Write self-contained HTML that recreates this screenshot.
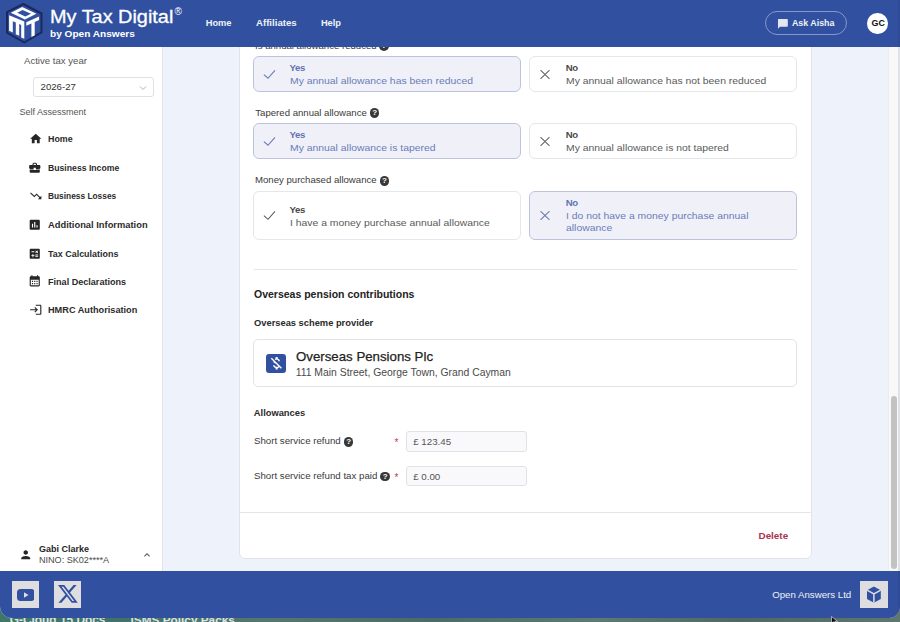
<!DOCTYPE html>
<html><head><meta charset="utf-8">
<style>
*{box-sizing:border-box;margin:0;padding:0}
html,body{width:900px;height:622px;overflow:hidden;font-family:"Liberation Sans",sans-serif;background:#3f5f55}
.a{position:absolute}
.t{position:absolute;white-space:nowrap;line-height:1}
.b{font-weight:700}
#bgtxt{position:absolute;left:0;top:596px;width:900px;height:26px;background:linear-gradient(90deg,#3f7869 0%,#3f7365 12%,#55786a 30%,#4b6d61 48%,#5d7b6f 66%,#50695f 82%,#5f776c 100%)}
#app{position:absolute;left:0;top:0;width:900px;height:617.8px;background:#eef2fa;border-radius:0 0 11px 12px;overflow:hidden}
#hdr{position:absolute;left:0;top:0;width:900px;height:47px;background:#3151a0;z-index:5}
#side{position:absolute;left:0;top:47px;width:163px;height:524px;background:#fff;border-right:1px solid #e1e4ea}
#track{position:absolute;left:888px;top:47px;width:12px;height:524px;background:#f8f8f8;border-left:1px solid #ececec}
#thumb{position:absolute;left:891px;top:396px;width:6px;height:173px;background:#c2c2c2;border-radius:3px}
#card{position:absolute;left:238.6px;top:20px;width:573px;height:539px;background:#fff;border:1px solid #e1e3e8;border-radius:0 0 6px 6px}
#ftr{position:absolute;left:0;top:571px;width:900px;height:47px;background:#3151a0}
#ftr~.a,#ftr~.t,#ftr~svg{z-index:6}
.nav{color:#eef1f8;font-size:9.3px;font-weight:700}
.sn{color:#2b2b2b;font-size:9.4px;font-weight:700;transform-origin:0 0}
.si{position:absolute;width:13px;height:13px;fill:#262626}
.opt{position:absolute;width:267.6px;border:1px solid #e6e7eb;border-radius:6px;background:#fff}
.opt.sel{background:#f0f1f8;border-color:#bdc3dd}
.lbl{color:#3a3a3a;font-size:9.6px}
.oy{font-size:9.6px;font-weight:700;color:#4a4a4a;letter-spacing:-0.35px}
.od{font-size:9.8px;color:#5a5a5a;transform:scaleX(1.06);transform-origin:0 0}
.oy.ys{color:#6273b3}
.od.ds{color:#6a7cb9}
.hq{position:absolute;width:9.8px;height:9.8px;border-radius:50%;background:#383838;color:#fff;font-size:8px;font-weight:700;text-align:center;line-height:9.8px}
.inp{position:absolute;left:406px;width:121px;height:20px;background:#f9f9fb;border:1px solid #e1e2e6;border-radius:3px}
.req{color:#b8405e;font-size:10px}
</style></head>
<body>
<div id="bgtxt"><span class="t b" style="left:9.7px;top:18.8px;font-size:11.9px;color:#dde3df">G-Cloud 15 Docs</span><span class="t b" style="left:130.6px;top:18.8px;font-size:11.8px;color:#dde3df">ISMS Policy Packs</span></div>
<div id="app">
 <div id="side">
  <div class="t" style="left:24px;top:9px;font-size:9.6px;color:#555">Active tax year</div>
  <div class="a" style="left:33.2px;top:30.2px;width:120.6px;height:20.2px;border:1px solid #dfe1e6;border-radius:3px;background:#fff"></div>
  <div class="t" style="left:40.6px;top:35px;font-size:9.6px;color:#333">2026-27</div>
  <svg class="a" style="left:139px;top:37.5px;width:8px;height:6px" viewBox="0 0 8 6"><path d="M1 1.5l3 3 3-3" fill="none" stroke="#aaa" stroke-width="0.9"/></svg>
  <div class="t" style="left:19.5px;top:61px;font-size:9px;color:#555">Self Assessment</div>
  <svg class="si" style="left:29.0px;top:84.7px;width:13.5px;height:13.5px" viewBox="0 0 24 24"><path d="M10 20v-6h4v6h5v-8h3L12 3 2 12h3v8z"/></svg>
  <div class="t sn" style="left:48.1px;top:87.03px;transform:scaleX(0.947)">Home</div>
  <svg class="si" style="left:28.4px;top:113.6px;width:13.5px;height:13.5px" viewBox="0 0 24 24"><path d="M10 16v-1H3.01L3 19c0 1.11.89 2 2 2h14c1.11 0 2-.89 2-2v-4h-7v1h-4zm10-9h-4.01V5l-2-2h-4l-2 2v2H4c-1.1 0-2 .9-2 2v3c0 1.11.89 2 2 2h6v-2h4v2h6c1.1 0 2-.9 2-2V9c0-1.1-.9-2-2-2zm-6 0h-4V5h4v2z"/></svg>
  <div class="t sn" style="left:48.1px;top:115.73px;transform:scaleX(0.924)">Business Income</div>
  <svg class="si" style="left:29.1px;top:142.2px;width:13.5px;height:13.5px" viewBox="0 0 24 24"><path d="M16 18l2.29-2.29-4.88-4.88-4 4L2 7.41 3.41 6l6 6 4-4 6.3 6.29L22 12v6z"/></svg>
  <div class="t sn" style="left:48.1px;top:144.43px;transform:scaleX(0.89)">Business Losses</div>
  <svg class="si" style="left:28.1px;top:170.6px;width:13.5px;height:13.5px" viewBox="0 0 24 24"><path d="M19 3H5c-1.1 0-2 .9-2 2v14c0 1.1.9 2 2 2h14c1.1 0 2-.9 2-2V5c0-1.1-.9-2-2-2zM9 17H7v-7h2v7zm4 0h-2V7h2v10zm4 0h-2v-4h2v4z"/></svg>
  <div class="t sn" style="left:48.1px;top:172.73px;transform:scaleX(0.996)">Additional Information</div>
  <svg class="si" style="left:28.1px;top:199.5px;width:13.5px;height:13.5px" viewBox="0 0 24 24"><path d="M19 3H5c-1.1 0-2 .9-2 2v14c0 1.1.9 2 2 2h14c1.1 0 2-.9 2-2V5c0-1.1-.9-2-2-2zm-5.97 4.06L14.09 6l1.41 1.41L16.91 6l1.06 1.06-1.41 1.41 1.41 1.41-1.06 1.06-1.41-1.4-1.41 1.41-1.06-1.060 1.41-1.41-1.41-1.42zm-6.78.66h5v1.5h-5v-1.5zM11.5 16h-2v2H8v-2H6v-1.5h2v-2h1.5v2h2V16zm6.5 1.25h-5v-1.5h5v1.5zm0-2.5h-5v-1.5h5v1.5z"/></svg>
  <div class="t sn" style="left:48.1px;top:201.73px;transform:scaleX(0.954)">Tax Calculations</div>
  <svg class="si" style="left:28.1px;top:227.1px;width:13.5px;height:13.5px" viewBox="0 0 24 24"><path d="M19 4h-1V2h-2v2H8V2H6v2H5c-1.11 0-1.99.9-1.99 2L3 20c0 1.1.89 2 2 2h14c1.1 0 2-.9 2-2V6c0-1.1-.9-2-2-2zm0 16H5V10h14v10zM9 14H7v-2h2v2zm4 0h-2v-2h2v2zm4 0h-2v-2h2v2zm-8 4H7v-2h2v2zm4 0h-2v-2h2v2zm4 0h-2v-2h2v2z"/></svg>
  <div class="t sn" style="left:48.1px;top:229.93px;transform:scaleX(0.967)">Final Declarations</div>
  <svg class="si" style="left:28.7px;top:255.5px;width:13.5px;height:13.5px" viewBox="0 0 24 24"><path d="M11 7 9.6 8.4l2.6 2.6H2v2h10.2l-2.6 2.6L11 17l5-5-5-5zm9 12h-8v2h8c1.1 0 2-.9 2-2V5c0-1.1-.9-2-2-2h-8v2h8v14z"/></svg>
  <div class="t sn" style="left:48.1px;top:258.33px;transform:scaleX(0.978)">HMRC Authorisation</div>
  <svg class="si" style="left:19.25px;top:500.75px;width:13.5px;height:13.5px" viewBox="0 0 24 24"><path d="M12 12c2.21 0 4-1.79 4-4s-1.79-4-4-4-4 1.79-4 4 1.79 4 4 4zm0 2c-2.67 0-8 1.34-8 4v2h16v-2c0-2.66-5.33-4-8-4z"/></svg>
  <div class="t b" style="left:38.9px;top:497.9px;font-size:9px;color:#262626">Gabi Clarke</div>
  <div class="t" style="left:38.9px;top:509.1px;font-size:9.1px;color:#4a4a4a">NINO: SK02****A</div>
  <svg class="a" style="left:140.9px;top:501.8px;width:12px;height:12px" viewBox="0 0 24 24"><path d="M12 8l-6 6 1.41 1.41L12 10.83l4.59 4.58L18 14z" fill="#555"/></svg>
 </div>
 <div id="card"></div>
<div class="t lbl" style="left:255px;top:40.9px">Is annual allowance reduced</div>
<div class="hq" style="left:379px;top:40.9px">?</div>
<div class="opt sel" style="left:253.3px;top:56.2px;height:35.8px"></div>
<svg class="a" style="left:263.3px;top:69px;width:14px;height:11px" viewBox="0 0 14 11"><path d="M0.9 5.6 L5 9.3 L12 1.3" fill="none" stroke="#6c7ab3" stroke-width="1.15"/></svg>
<div class="t oy ys" style="left:289.6px;top:63.08px">Yes</div>
<div class="t od ds" style="left:289.6px;top:75.9px">My annual allowance has been reduced</div>
<div class="opt" style="left:529.4px;top:56.2px;height:35.8px"></div>
<svg class="a" style="left:540.1999999999999px;top:69.7px;width:10px;height:9px" viewBox="0 0 10 9"><path d="M0.5 0.2 L9.5 8.8 M9.5 0.2 L0.5 8.8" fill="none" stroke="#5c5c5c" stroke-width="1.05"/></svg>
<div class="t oy " style="left:565.6999999999999px;top:63.08px">No</div>
<div class="t od " style="left:565.6999999999999px;top:75.9px">My annual allowance has not been reduced</div>
<div class="t lbl" style="left:255.3px;top:107.67px">Tapered annual allowance</div>
<div class="hq" style="left:369.7px;top:108.2px">?</div>
<div class="opt sel" style="left:253.3px;top:123.3px;height:36.2px"></div>
<svg class="a" style="left:263.3px;top:136.1px;width:14px;height:11px" viewBox="0 0 14 11"><path d="M0.9 5.6 L5 9.3 L12 1.3" fill="none" stroke="#6c7ab3" stroke-width="1.15"/></svg>
<div class="t oy ys" style="left:289.6px;top:130.18px">Yes</div>
<div class="t od ds" style="left:289.6px;top:143.0px">My annual allowance is tapered</div>
<div class="opt" style="left:529.4px;top:123.3px;height:36.2px"></div>
<svg class="a" style="left:540.1999999999999px;top:136.8px;width:10px;height:9px" viewBox="0 0 10 9"><path d="M0.5 0.2 L9.5 8.8 M9.5 0.2 L0.5 8.8" fill="none" stroke="#5c5c5c" stroke-width="1.05"/></svg>
<div class="t oy " style="left:565.6999999999999px;top:130.18px">No</div>
<div class="t od " style="left:565.6999999999999px;top:143.0px">My annual allowance is not tapered</div>
<div class="t lbl" style="left:255px;top:175.37px">Money purchased allowance</div>
<div class="hq" style="left:379.5px;top:175.9px">?</div>
<div class="opt" style="left:253.3px;top:190.9px;height:49.4px"></div>
<svg class="a" style="left:263.3px;top:210.2px;width:14px;height:11px" viewBox="0 0 14 11"><path d="M0.9 5.6 L5 9.3 L12 1.3" fill="none" stroke="#5c5c5c" stroke-width="1.05"/></svg>
<div class="t oy " style="left:289.6px;top:204.58px">Yes</div>
<div class="t od " style="left:289.6px;top:217.7px">I have a money purchase annual allowance</div>
<div class="opt sel" style="left:529.4px;top:190.9px;height:49.4px"></div>
<svg class="a" style="left:540.1999999999999px;top:211.4px;width:10px;height:9px" viewBox="0 0 10 9"><path d="M0.5 0.2 L9.5 8.8 M9.5 0.2 L0.5 8.8" fill="none" stroke="#6c7ab3" stroke-width="1.15"/></svg>
<div class="t oy ys" style="left:565.6999999999999px;top:197.88px">No</div>
<div class="t od ds" style="left:565.6999999999999px;top:210.6px">I do not have a money purchase annual</div>
<div class="t od ds" style="left:565.6999999999999px;top:223.4px">allowance</div>
<div class="a" style="left:254px;top:268.5px;width:543px;height:1px;background:#e6e6e9"></div>
<div class="t b" style="left:254px;top:289.2px;font-size:10.5px;color:#222">Overseas pension contributions</div>
<div class="t b" style="left:254px;top:317.8px;font-size:9.8px;color:#2a2a2a;transform:scaleX(0.952);transform-origin:0 0">Overseas scheme provider</div>
<div class="a" style="left:253.3px;top:339.3px;width:543.7px;height:48px;border:1px solid #e2e3e8;border-radius:5px"></div>
<div class="a" style="left:266.2px;top:353.8px;width:19.7px;height:19.5px;background:#3151a0;border-radius:3px"></div>
<svg class="a" style="left:268px;top:355.3px;width:16.6px;height:16.6px" viewBox="0 0 24 24"><path fill="#fff" d="M12.5 6.9c1.78 0 2.44.85 2.5 2.1h2.21c-.07-1.72-1.12-3.3-3.21-3.81V3h-3v2.16c-.53.12-1.03.3-1.48.54l1.47 1.47c.41-.17.91-.27 1.51-.27zM5.47 3.92 4.06 5.33 7.5 8.77c0 2.08 1.56 3.21 3.91 3.910l3.51 3.51c-.34.48-1.05.91-2.420.91-2.06 0-2.87-.92-2.98-2.1h-2.2c.12 2.19 1.76 3.42 3.68 3.83V21h3v-2.15c.96-.18 1.82-.55 2.45-1.12l2.22 2.22 1.41-1.41L5.47 3.92z"/></svg>
<div class="t" style="left:295.7px;top:349.5px;font-size:13.6px;color:#222;-webkit-text-stroke:0.25px #222;transform:scaleX(0.975);transform-origin:0 0">Overseas Pensions Plc</div>
<div class="t" style="left:295.7px;top:368.3px;font-size:10.38px;color:#4a4a4a">111 Main Street, George Town, Grand Cayman</div>
<div class="t b" style="left:253.8px;top:408.5px;font-size:9.34px;color:#2a2a2a">Allowances</div>
<div class="t lbl" style="left:254px;top:436.1px;font-size:9.7px">Short service refund</div>
<div class="hq" style="left:343.7px;top:436.9px">?</div>
<div class="t req" style="left:394.5px;top:437.9px">*</div>
<div class="inp" style="top:431.4px;height:20.2px"></div>
<div class="t" style="left:413.2px;top:437px;font-size:9.76px;color:#555">£ 123.45</div>
<div class="t lbl" style="left:254px;top:470.7px;font-size:9.7px">Short service refund tax paid</div>
<div class="hq" style="left:380.3px;top:471.5px">?</div>
<div class="t req" style="left:394.5px;top:472.9px">*</div>
<div class="inp" style="top:466.3px;height:20.1px"></div>
<div class="t" style="left:413.2px;top:471.7px;font-size:9.76px;color:#555">£ 0.00</div>
<div class="a" style="left:240px;top:512px;width:571px;height:1px;background:#e6e6e9"></div>
<div class="t b" style="left:758.5px;top:530.6px;font-size:9.9px;color:#a9354f">Delete</div>
 <div id="track"></div><div id="thumb"></div>
 <div id="hdr">
  <svg class="a" style="left:0;top:0;width:50px;height:47px" viewBox="0 0 50 47">
   <path d="M23.3 4 L41.5 13.5 L41.5 32.4 L24.3 42.5 L7 32.7 L7 12.1 Z" fill="#3151a0" stroke="#1b2a5c" stroke-width="2" stroke-linejoin="round"/>
   <path fill="#fff" fill-rule="evenodd" d="M10.8 12.8 L22.2 7.1 L36.4 13.8 L24.9 19.6 Z M17.2 12.8 L22.6 10.1 L31 13.8 L25.3 16.5 Z"/>
   <path fill="#fff" d="M9.1 15.2 L24.3 21.6 L24.3 38.8 L21.2 37.4 L21.2 25 L19.2 24.1 L19.2 35.8 L15.8 34.3 L15.8 22.6 L12.8 21.3 L12.8 32.4 L9.1 30.8 Z"/>
   <path fill="#fff" d="M26.3 22.3 L39.1 16.5 L39.1 20 L34.7 22 L34.7 35.4 L31.4 37.1 L31.4 23.4 L26.3 25.8 Z"/>
  </svg>
  <div class="t" style="left:49.6px;top:7.6px;font-size:18.3px;color:#fff;transform:scaleX(1.087);transform-origin:0 0;-webkit-text-stroke:0.3px #fff">My Tax Digital</div>
  <div class="t" style="left:174.5px;top:7px;font-size:10px;color:#fff">®</div>
  <div class="t b" style="left:49.8px;top:28.7px;font-size:9.8px;color:#fff;transform:scaleX(1.03);transform-origin:0 0">by Open Answers</div>
  <div class="t nav" style="left:205.7px;top:18.5px">Home</div>
  <div class="t nav" style="left:255.8px;top:18.5px;transform:scaleX(1.035);transform-origin:0 0">Affiliates</div>
  <div class="t nav" style="left:320.9px;top:18.5px">Help</div>
  <div class="a" style="left:765.4px;top:10.9px;width:81.7px;height:24.4px;border:1px solid #8597cc;border-radius:13px"></div>
  <svg class="a" style="left:776.9px;top:18px;width:11.8px;height:11.8px" viewBox="0 0 24 24"><path d="M20 2H4c-1.1 0-1.99.9-1.99 2L2 22l4-4h14c1.1 0 2-.9 2-2V4c0-1.1-.9-2-2-2z" fill="#e3e6f0"/></svg>
  <div class="t b" style="left:791.9px;top:18.7px;font-size:8.9px;color:#eef1f8">Ask Aisha</div>
  <div class="a" style="left:867.3px;top:13.4px;width:20.5px;height:20.5px;border-radius:50%;background:#fff"></div>
  <div class="t b" style="left:871.5px;top:19.3px;font-size:8.9px;color:#111">GC</div>
 </div>
 <div id="ftr"></div>
<div class="a" style="left:898.4px;top:0;width:1.6px;height:618px;background:rgba(20,30,60,0.10);z-index:7"></div>
<div class="a" style="left:12.1px;top:581.1px;width:27.1px;height:26.9px;background:#dedee0"></div>
<svg class="a" style="left:16.8px;top:588.7px;width:17.5px;height:12px" viewBox="0 0 17.5 12"><rect x="0" y="0" width="17.5" height="12" rx="3.5" fill="#3151a0"/><path d="M7 3.2 L11.5 6 L7 8.8 Z" fill="#dedee0"/></svg>
<div class="a" style="left:53.9px;top:581.1px;width:27.1px;height:26.9px;background:#dedee0"></div>
<svg class="a" style="left:57.9px;top:583.95px;width:19.8px;height:19.8px" viewBox="0 0 24 24"><path fill="#3151a0" d="M18.901 1.153h3.68l-8.04 9.19L24 22.846h-7.406l-5.8-7.584-6.638 7.584H.474l8.6-9.83L0 1.154h7.594l5.243 6.932ZM17.61 20.644h2.039L6.486 3.24H4.298Z"/></svg>
<div class="t" style="left:772.2px;top:590.4px;font-size:9.69px;color:#eef1f8">Open Answers Ltd</div>
<div class="a" style="left:860px;top:580.8px;width:27.9px;height:27.3px;background:#dedee0"></div>
<svg class="a" style="left:860px;top:580.8px;width:27.9px;height:27.3px" viewBox="860 580.8 27.9 27.3"><path d="M873.9 586.2 L880.8 590 L880.8 598.8 L873.9 602.6 L867 598.8 L867 590 Z" fill="#3151a0"/><path d="M867 590 L873.9 593.8 L880.8 590 M873.9 593.8 L873.9 602.6" fill="none" stroke="#dedee0" stroke-width="1.5"/></svg>

</div>
<svg class="a" style="left:831px;top:616px;width:8px;height:8px;z-index:9" viewBox="0 0 8 8"><path d="M0.5 0.5 L0.5 7.5 L2.5 5.8 L4 8 L5 7.4 L3.8 5.3 L6.5 5.3 Z" fill="#111" stroke="#eee" stroke-width="0.6"/></svg>
</body></html>
